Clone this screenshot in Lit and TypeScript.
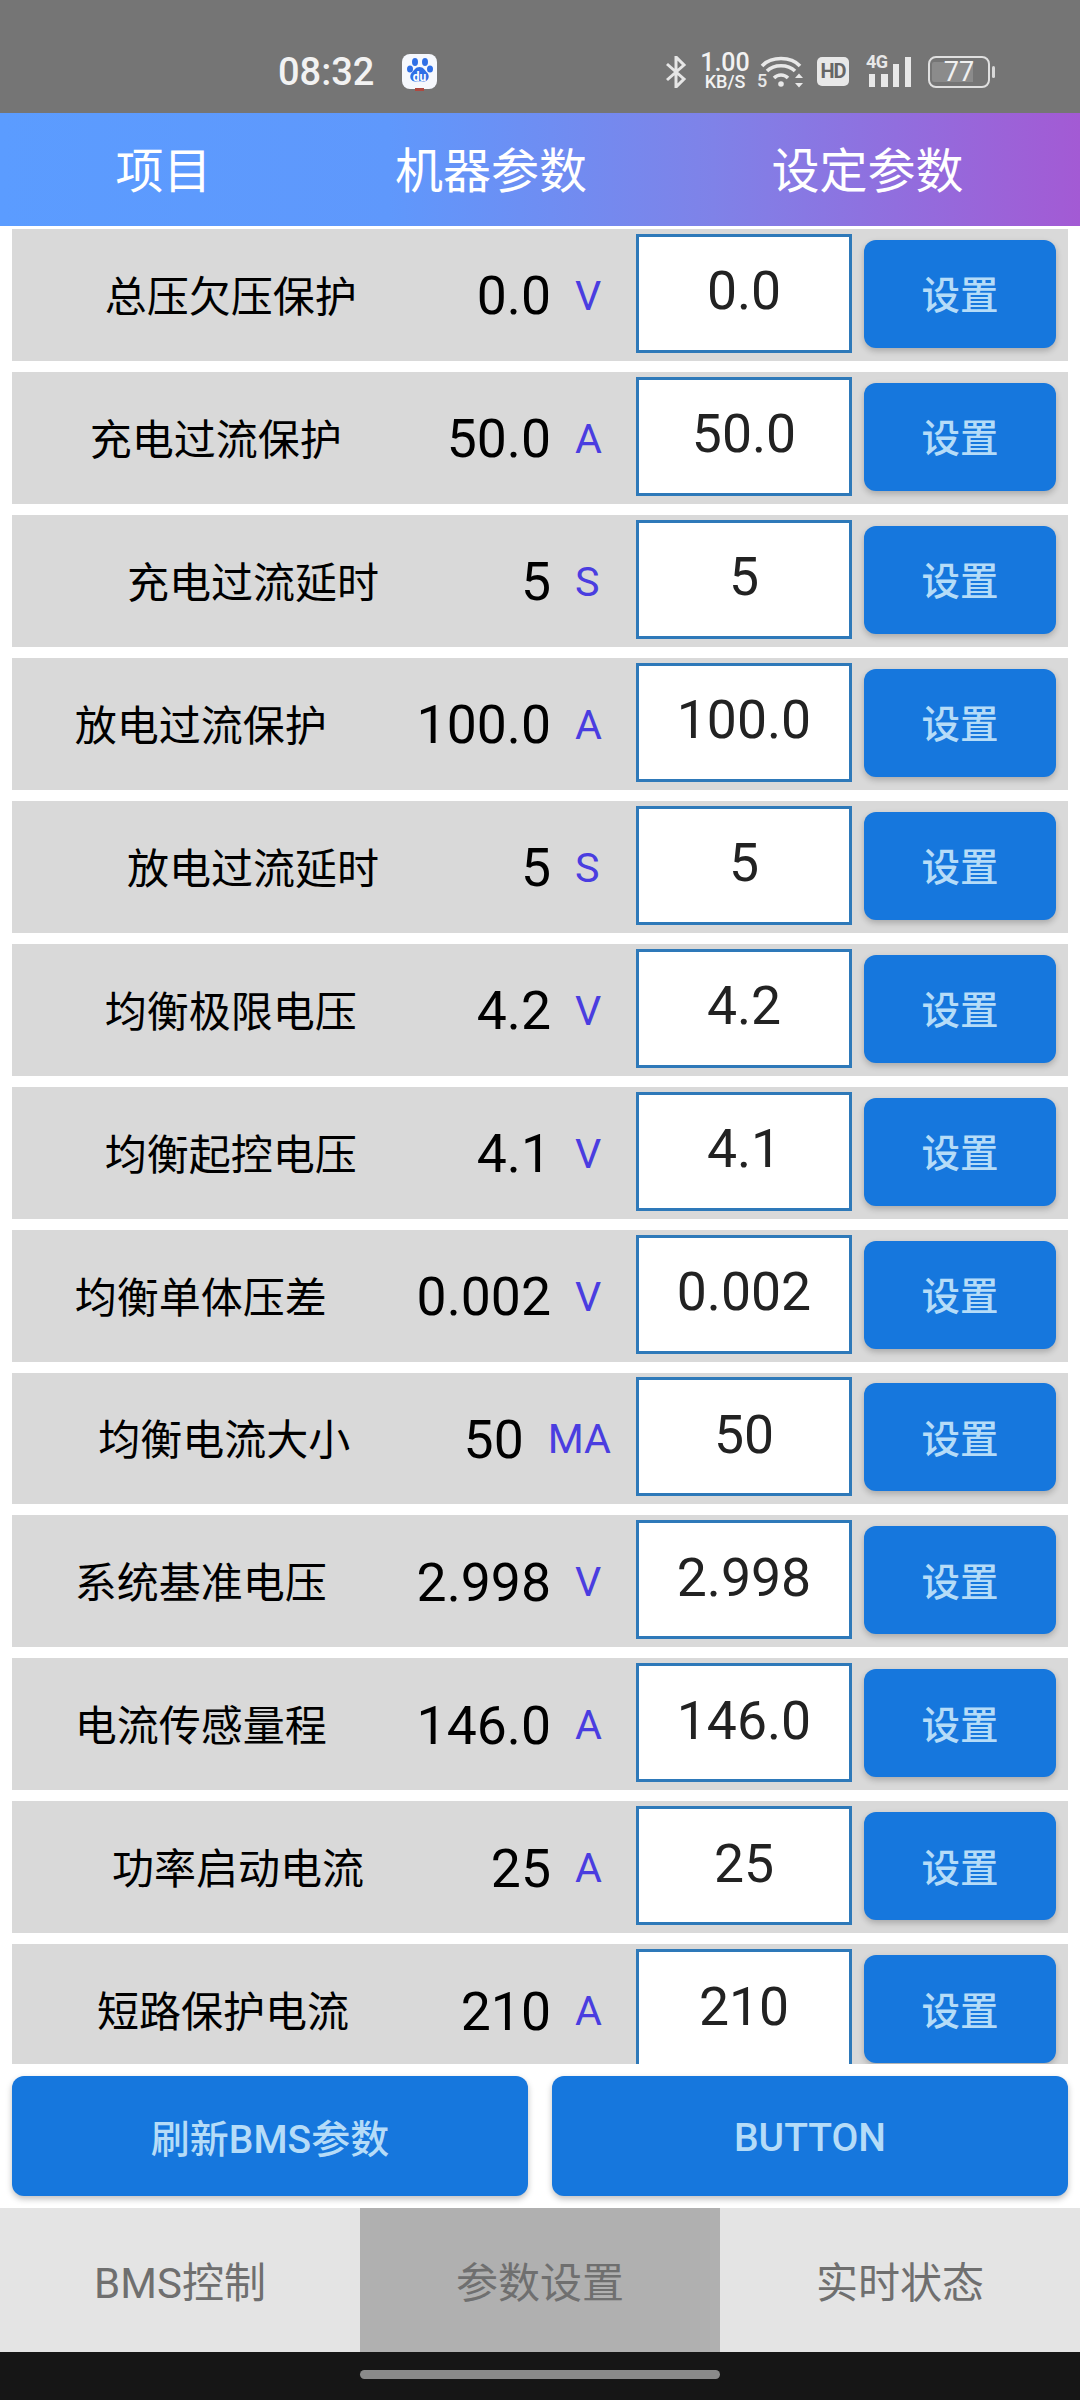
import { LitElement, html, css } from 'lit';
import { customElement } from 'lit/decorators.js';

interface ParamRow {
  label: string;
  value: string;
  unit: string;
}

const ROWS: ParamRow[] = [
  { label: '总压欠压保护', value: '0.0', unit: 'V' },
  { label: '充电过流保护', value: '50.0', unit: 'A' },
  { label: '充电过流延时', value: '5', unit: 'S' },
  { label: '放电过流保护', value: '100.0', unit: 'A' },
  { label: '放电过流延时', value: '5', unit: 'S' },
  { label: '均衡极限电压', value: '4.2', unit: 'V' },
  { label: '均衡起控电压', value: '4.1', unit: 'V' },
  { label: '均衡单体压差', value: '0.002', unit: 'V' },
  { label: '均衡电流大小', value: '50', unit: 'MA' },
  { label: '系统基准电压', value: '2.998', unit: 'V' },
  { label: '电流传感量程', value: '146.0', unit: 'A' },
  { label: '功率启动电流', value: '25', unit: 'A' },
  { label: '短路保护电流', value: '210', unit: 'A' },
];

@customElement('status-bar')
export class StatusBar extends LitElement {
  static styles = css`
    :host {
      display: flex;
      align-items: center;
      height: 113px;
      box-sizing: border-box;
      padding: 30px 84px 0 278px;
      background: #757575;
      color: #f2f2f2;
      font-family: Roboto, sans-serif;
    }
    svg {
      display: block;
      flex-shrink: 0;
    }
    .time {
      font-size: 38px;
      font-weight: 500;
      width: 94px;
      white-space: nowrap;
    }
    .app-icon {
      position: relative;
      margin-left: 30px;
    }
    .app-icon span {
      position: absolute;
      left: 0;
      right: 0;
      top: 17px;
      color: #fff;
      font-size: 12px;
      font-weight: 700;
      line-height: 14px;
      text-align: center;
    }
    .icons {
      display: flex;
      align-items: center;
      margin-left: auto;
    }
    .speed {
      display: flex;
      flex-direction: column;
      align-items: center;
      width: 46px;
      margin-left: 15px;
      font-weight: 500;
      line-height: 1;
    }
    .speed b {
      font-size: 25px;
      font-weight: 500;
      height: 20px;
      line-height: 20px;
    }
    .speed span {
      font-size: 18px;
      height: 18px;
      line-height: 18px;
    }
    .wifi {
      position: relative;
      margin-left: 8px;
    }
    .wifi span {
      position: absolute;
      left: 1px;
      bottom: 0;
      color: #e8e8e8;
      font-size: 18px;
      font-weight: 500;
      line-height: 16px;
    }
    .hd {
      width: 32px;
      height: 29px;
      margin-left: 11px;
      border-radius: 5px;
      background: #e8e8e8;
      color: #666;
      font-size: 20px;
      font-weight: 700;
      line-height: 29px;
      text-align: center;
      letter-spacing: -1px;
    }
    .signal {
      position: relative;
      margin-left: 17px;
    }
    .signal span {
      position: absolute;
      left: 0;
      top: -1px;
      color: #e8e8e8;
      font-size: 18px;
      font-weight: 700;
      line-height: 16px;
      letter-spacing: -0.5px;
    }
    .battery {
      position: relative;
      margin-left: 16px;
    }
    .battery span {
      position: absolute;
      left: 0;
      width: 62px;
      top: 0;
      color: #f0f0f0;
      font-size: 27px;
      line-height: 32px;
      text-align: center;
    }
  `;

  render() {
    return html`
      <div class="time">08:32</div>
      <div class="app-icon">
        <svg width="35" height="38" viewBox="0 0 35 38">
          <rect x="0" y="1" width="35" height="35" rx="8" fill="#f6f8fd"></rect>
          <rect x="13" y="35" width="9" height="3" fill="#b0483f"></rect>
          <ellipse cx="13" cy="9" rx="3" ry="4" fill="#2f6fe6"></ellipse>
          <ellipse cx="23" cy="9" rx="3" ry="4" fill="#2f6fe6"></ellipse>
          <ellipse cx="8" cy="16" rx="3" ry="3.600" fill="#2f6fe6"></ellipse>
          <ellipse cx="28" cy="16" rx="3" ry="3.600" fill="#2f6fe6"></ellipse>
          <path d="M17.500 14c4 0 5 3 8 6 3 4 0 9-4 8.500-3-.5-5-.5-8 0-4 .5-7-4.500-4-8.500 3-3 4-6 8-6z" fill="#2f6fe6"></path>
        </svg>
        <span>du</span>
      </div>
      <div class="icons">
        <svg width="22" height="32" viewBox="0 0 22 32" fill="none" stroke="#e6e6e6" stroke-width="3">
          <path d="M2 8 19 23 11 31V1L19 9 2 24"></path>
        </svg>
        <div class="speed"><b>1.00</b><span>KB/S</span></div>
        <div class="wifi">
          <svg width="50" height="34" viewBox="0 0 50 34" fill="none" stroke="#e8e8e8" stroke-width="3.500">
            <path d="M6 11C15 1 35 1 44 11"></path>
            <path d="M11 16C18 9 32 9 39 16"></path>
            <path d="M18 23C22 19 28 19 32 23"></path>
            <circle cx="25" cy="29" r="2.800" fill="#e8e8e8" stroke="none"></circle>
            <path d="M39 23h8l-4-4.500zM39 28h8l-4 4.500z" fill="#e8e8e8" stroke="none"></path>
          </svg>
          <span>5</span>
        </div>
        <div class="hd">HD</div>
        <div class="signal">
          <svg width="46" height="34" viewBox="0 0 46 34" fill="#e8e8e8">
            <rect x="3" y="19" width="6" height="13"></rect>
            <rect x="15" y="19" width="7" height="13"></rect>
            <rect x="27" y="9" width="6" height="23"></rect>
            <rect x="39" y="2" width="6" height="30"></rect>
          </svg>
          <span>4G</span>
        </div>
        <div class="battery">
          <svg width="68" height="32" viewBox="0 0 68 32">
            <rect x="1" y="1" width="60" height="30" rx="7" fill="none" stroke="#e0e0e0" stroke-width="2"></rect>
            <path d="M6 6H45V26H6A2 2 0 0 1 4 24V8A2 2 0 0 1 6 6z" fill="#8b8b8b"></path>
            <rect x="64" y="10" width="3" height="12" rx="1.500" fill="#d8d8d8"></rect>
          </svg>
          <span>77</span>
        </div>
      </div>
    `;
  }
}

@customElement('param-row')
export class ParamRowEl extends LitElement {
  static properties = {
    label: {},
    value: {},
    unit: {},
  };

  label = '';
  value = '';
  unit = '';

  static styles = css`
    :host {
      display: flex;
      align-items: center;
      flex-shrink: 0;
      height: 131.950px;
      padding-right: 12px;
      background: #d9d9d9;
      font-family: Roboto, 'Noto Sans CJK SC', sans-serif;
    }
    .label {
      flex: 1;
      min-width: 0;
      padding-bottom: 3px;
      font-size: 42px;
      color: #000;
      text-align: center;
      white-space: nowrap;
    }
    .value {
      margin-left: 27px;
      padding-top: 2px;
      font-size: 53.500px;
      color: #000;
    }
    .unit {
      min-width: 36px;
      margin: 0 25px 0 24px;
      padding-top: 2px;
      font-size: 41.250px;
      color: #4a3de0;
    }
    .field {
      width: 216px;
      height: 119px;
      box-sizing: border-box;
      margin-bottom: 3px;
      padding-bottom: 5px;
      border: 3px solid #2e79b9;
      background: #fff;
      color: #222;
      font-size: 53.500px;
      display: flex;
      align-items: center;
      justify-content: center;
    }
    button {
      width: 192px;
      height: 108px;
      margin: 0 0 2px 12px;
      padding: 0 0 3px;
      border: none;
      border-radius: 12px;
      background: #1677dd;
      color: #b5dcf8;
      font-family: inherit;
      font-size: 38.500px;
      font-weight: 500;
      box-shadow: 0 3px 6px rgba(0, 0, 0, 0.22);
    }
  `;

  render() {
    return html`
      <div class="label">${this.label}</div>
      <div class="value">${this.value}</div>
      <div class="unit">${this.unit}</div>
      <div class="field">${this.value}</div>
      <button>设置</button>
    `;
  }
}

@customElement('app-root')
export class AppRoot extends LitElement {
  static styles = css`
    :host {
      display: flex;
      flex-direction: column;
      width: 1080px;
      height: 2400px;
      background: #fff;
      font-family: Roboto, 'Noto Sans CJK SC', sans-serif;
      overflow: hidden;
    }
    .header {
      display: grid;
      grid-template-columns: 327px 328px 1fr;
      align-items: center;
      height: 113px;
      box-sizing: border-box;
      padding-bottom: 5px;
      background: linear-gradient(to right, #5b9cff 0%, #5f98fc 36%, #7f82e8 66%, #a35ad4 100%);
      color: #fff;
      font-size: 48px;
      text-align: center;
    }
    .list {
      display: flex;
      flex-direction: column;
      gap: 11px;
      height: 1838px;
      box-sizing: border-box;
      padding: 3px 12px 0;
      overflow: hidden;
    }
    .actions {
      display: grid;
      grid-template-columns: 1fr 1fr;
      gap: 24px;
      padding: 12px;
    }
    .actions button {
      height: 120px;
      padding: 0;
      border: none;
      border-radius: 12px;
      background: #1677dd;
      color: #b5dcf8;
      font-family: inherit;
      font-size: 39px;
      font-weight: 500;
      box-shadow: 0 3px 6px rgba(0, 0, 0, 0.25);
    }
    .actions button.latin {
      padding-top: 3px;
    }
    .tabs {
      display: grid;
      grid-template-columns: 1fr 1fr 1fr;
      height: 144px;
      background: #e4e4e4;
      color: #6f6f6f;
      font-size: 42px;
    }
    .tabs div {
      display: flex;
      align-items: center;
      justify-content: center;
      padding-bottom: 2px;
    }
    .tabs .active {
      background: #b0b0b0;
    }
    .nav {
      display: flex;
      justify-content: center;
      height: 48px;
      padding-top: 18px;
      box-sizing: border-box;
      background: #161616;
    }
    .nav div {
      width: 360px;
      height: 9px;
      border-radius: 5px;
      background: #8a8a8a;
    }
  `;

  render() {
    return html`
      <status-bar></status-bar>
      <div class="header">
        <div>项目</div>
        <div>机器参数</div>
        <div>设定参数</div>
      </div>
      <div class="list">
        ${ROWS.map(r => html`<param-row .label=${r.label} .value=${r.value} .unit=${r.unit}></param-row>`)}
      </div>
      <div class="actions">
        <button>刷新BMS参数</button>
        <button class="latin">BUTTON</button>
      </div>
      <div class="tabs">
        <div>BMS控制</div>
        <div class="active">参数设置</div>
        <div>实时状态</div>
      </div>
      <div class="nav"><div></div></div>
    `;
  }
}
